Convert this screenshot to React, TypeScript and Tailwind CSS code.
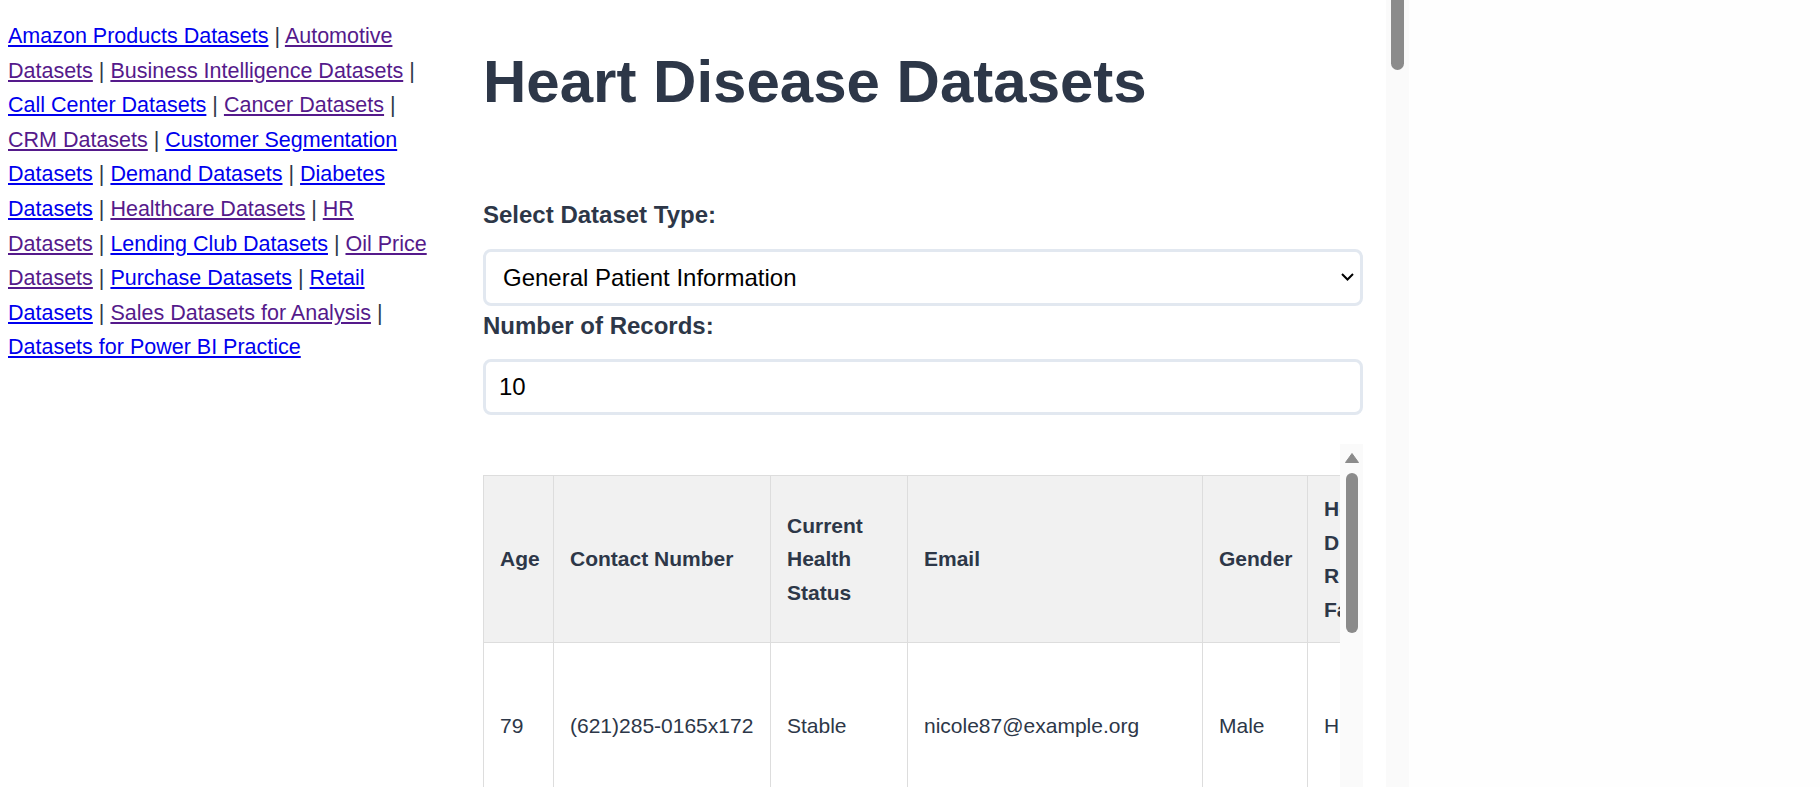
import React from 'react';

interface NavLink {
  label: string;
  visited: boolean;
}

const navLinks: NavLink[] = [
  { label: 'Amazon Products Datasets', visited: false },
  { label: 'Automotive Datasets', visited: true },
  { label: 'Business Intelligence Datasets', visited: true },
  { label: 'Call Center Datasets', visited: false },
  { label: 'Cancer Datasets', visited: true },
  { label: 'CRM Datasets', visited: true },
  { label: 'Customer Segmentation Datasets', visited: false },
  { label: 'Demand Datasets', visited: false },
  { label: 'Diabetes Datasets', visited: false },
  { label: 'Healthcare Datasets', visited: true },
  { label: 'HR Datasets', visited: true },
  { label: 'Lending Club Datasets', visited: false },
  { label: 'Oil Price Datasets', visited: true },
  { label: 'Purchase Datasets', visited: false },
  { label: 'Retail Datasets', visited: false },
  { label: 'Sales Datasets for Analysis', visited: true },
  { label: 'Datasets for Power BI Practice', visited: false },
];

const columns = [
  { key: 'age', label: 'Age', width: 70 },
  { key: 'contact', label: 'Contact Number', width: 217 },
  { key: 'status', label: 'Current Health Status', width: 137 },
  { key: 'email', label: 'Email', width: 295 },
  { key: 'gender', label: 'Gender', width: 105 },
  { key: 'risk', label: 'Heart Disease Risk Factors', width: 142 },
  { key: 'name', label: 'Name', width: 200 },
  { key: 'id', label: 'Patient ID', width: 160 },
];

const rows: Record<string, string>[] = [
  { age: '79', contact: '(621)285-0165x172', status: 'Stable', email: 'nicole87@example.org', gender: 'Male', risk: 'High Blood Pressure', name: 'Brian Thompson', id: 'P-10293' },
  { age: '54', contact: '+1-842-377-9014', status: 'Critical', email: 'jwilliams@example.com', gender: 'Female', risk: 'Smoking', name: 'Laura Mitchell', id: 'P-48211' },
  { age: '61', contact: '509.226.4481', status: 'Improving', email: 'dgarcia@example.net', gender: 'Male', risk: 'Diabetes', name: 'Kevin Ross', id: 'P-77034' },
];

function ScrollArrowUp() {
  return (
    <svg width="14" height="10" viewBox="0 0 14 10" className="block">
      <path d="M7 0.5 L13.5 9.5 L0.5 9.5 Z" fill="#8b8b8b" stroke="#8b8b8b" strokeLinejoin="round" />
    </svg>
  );
}

export default function App() {
  return (
    <div className="flex h-[787px] w-[1820px] overflow-hidden bg-[#fefefe] font-['Liberation_Sans',Arial,sans-serif] text-[#2d3748]">
      <div className="flex w-[1386px] shrink-0 bg-white">
        {/* Sidebar links */}
        <div className="w-[483px] shrink-0 pl-[8px] pr-[47px] pt-[19px]">
          <p className="text-[21.5px] leading-[34.6px]">
            {navLinks.map((link, i) => (
              <React.Fragment key={link.label}>
                <a
                  href="#"
                  className={link.visited ? 'text-[#551a8b] underline' : 'text-[#0000ee] underline'}
                >
                  {link.label}
                </a>
                {i < navLinks.length - 1 && ' | '}
              </React.Fragment>
            ))}
          </p>
        </div>

        {/* Main column */}
        <div className="flex w-[880px] shrink-0 flex-col">
          <h1 className="mt-[52px] text-[60px] font-bold leading-[60px]">Heart Disease Datasets</h1>

          <label className="mt-[85px] block text-[24px] font-bold leading-[36px]">Select Dataset Type:</label>
          <div className="relative mt-[16px]">
            <select className="block h-[57px] w-full appearance-none rounded-[8px] border-[3px] border-[#e2e8f0] bg-white pl-[17px] pr-[40px] text-[24px] text-black">
              <option>General Patient Information</option>
              <option>Medical History</option>
              <option>Lifestyle Factors</option>
            </select>
            <svg
              width="13"
              height="8"
              viewBox="0 0 13 8"
              className="pointer-events-none absolute right-[9px] top-[24px]"
            >
              <path d="M1 1 L6.5 6.5 L12 1" fill="none" stroke="#000" strokeWidth="2" />
            </svg>
          </div>

          <label className="mt-[2px] block text-[24px] font-bold leading-[36px]">Number of Records:</label>
          <input
            type="number"
            defaultValue={10}
            className="mt-[15px] block h-[56px] w-full rounded-[8px] border-[3px] border-[#e2e8f0] bg-white px-[13px] text-[24px] text-black [appearance:textfield]"
          />

          {/* Table with its own scroll area */}
          <div className="mt-[29px] flex min-h-0 flex-1">
            <div className="min-w-0 flex-1 overflow-hidden pt-[31px]">
              <table
                className="table-fixed border-collapse text-[21px]"
                style={{ width: columns.reduce((s, c) => s + c.width, 0) }}
              >
                <colgroup>
                  {columns.map((c) => (
                    <col key={c.key} style={{ width: c.width }} />
                  ))}
                </colgroup>
                <thead>
                  <tr className="bg-[#f1f1f1]">
                    {columns.map((c) => (
                      <th
                        key={c.key}
                        className="border border-[#dddddd] px-[16px] py-[16px] text-left align-middle font-bold leading-[33.5px]"
                      >
                        {c.label}
                      </th>
                    ))}
                  </tr>
                </thead>
                <tbody>
                  {rows.map((r) => (
                    <tr key={r.id} className="h-[166px]">
                      {columns.map((c) => (
                        <td
                          key={c.key}
                          className="overflow-hidden whitespace-nowrap border border-[#dddddd] px-[16px] py-[16px] align-middle leading-[33.5px]"
                        >
                          {r[c.key]}
                        </td>
                      ))}
                    </tr>
                  ))}
                </tbody>
              </table>
            </div>
            <div className="flex w-[23px] shrink-0 flex-col items-center bg-[#fafafa] pt-[9px]">
              <ScrollArrowUp />
              <div className="mt-[10px] h-[160px] w-[12px] rounded-full bg-[#8b8b8b]" />
            </div>
          </div>
        </div>
      </div>

      {/* Page scrollbar */}
      <div className="w-[23px] shrink-0 bg-[#fafafa]">
        <div className="ml-[5px] h-[70px] w-[13px] rounded-b-full bg-[#8b8b8b]" />
      </div>

      <div className="flex-1" />
    </div>
  );
}
